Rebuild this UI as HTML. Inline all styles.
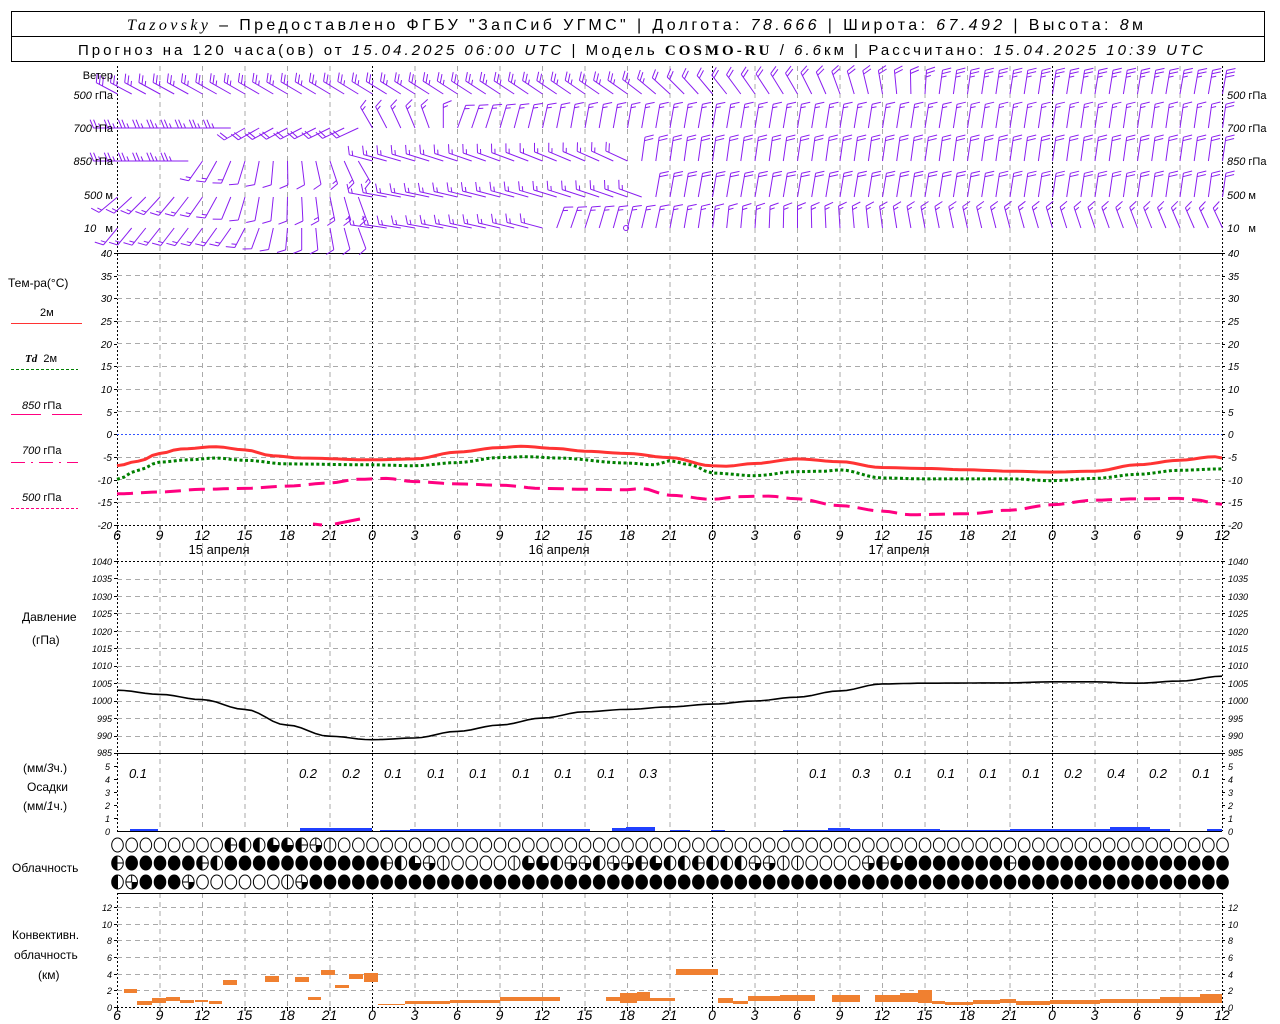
<!DOCTYPE html>
<html><head><meta charset="utf-8"><style>
html,body{margin:0;padding:0;background:#fff;}
svg{display:block;}
text{font-family:"Liberation Sans",sans-serif;fill:#000;}
.it{font-style:italic;}
.ax{font-size:10px;font-style:italic;}
.px{font-size:9px;font-style:italic;}
.hx{font-size:14px;font-style:italic;}
.lb{font-size:12px;}
</style></head><body>
<svg id="s" width="1280" height="1024" viewBox="0 0 1280 1024" xmlns="http://www.w3.org/2000/svg">
<rect width="1280" height="1024" fill="#fff"/>
<rect x="11.5" y="11.5" width="1253" height="50" fill="none" stroke="#000"/>
<line x1="11" y1="36.5" x2="1265" y2="36.5" stroke="#000"/>
<text x="127" y="30" font-size="16" textLength="1016" lengthAdjust="spacing"><tspan font-family="Liberation Serif" font-style="italic">Tazovsky</tspan> – Предоставлено ФГБУ "ЗапСиб УГМС" | Долгота: <tspan font-style="italic">78.666</tspan> | Широта: <tspan font-style="italic">67.492</tspan> | Высота: <tspan font-style="italic">8</tspan>м</text>
<text x="78" y="55" font-size="15" textLength="1125" lengthAdjust="spacing">Прогноз на 120 часа(ов) от <tspan font-style="italic">15.04.2025 06:00 UTC</tspan> | Модель <tspan font-family="Liberation Serif" font-weight="bold">COSMO-RU</tspan> / <tspan font-style="italic">6.6</tspan>км | Рассчитано: <tspan font-style="italic">15.04.2025 10:39 UTC</tspan></text>

<g id="grid"></g>
<g id="data"></g>

<g font-size="11">
<text x="113" y="79" text-anchor="end">Ветер</text>
<text x="113" y="99" text-anchor="end"><tspan class="it">500</tspan> гПа</text>
<text x="113" y="132" text-anchor="end"><tspan class="it">700</tspan> гПа</text>
<text x="113" y="165" text-anchor="end"><tspan class="it">850</tspan> гПа</text>
<text x="113" y="199" text-anchor="end"><tspan class="it">500</tspan> м</text>
<text x="113" y="232" text-anchor="end"><tspan class="it">10</tspan>&#160;&#160; м</text>
<text x="1227" y="99"><tspan class="it">500</tspan> гПа</text>
<text x="1227" y="132"><tspan class="it">700</tspan> гПа</text>
<text x="1227" y="165"><tspan class="it">850</tspan> гПа</text>
<text x="1227" y="199"><tspan class="it">500</tspan> м</text>
<text x="1227" y="232"><tspan class="it">10</tspan>&#160;&#160; м</text>
</g>

<g font-size="12">
<text x="8" y="287">Тем-ра(°C)</text>
<text x="40" y="316" font-size="11">2м</text>
<text x="25" y="362" font-size="11"><tspan font-family="Liberation Serif" font-style="italic" font-weight="bold">Td</tspan>&#160; 2м</text>
<text x="22" y="409" font-size="11"><tspan class="it">850</tspan> гПа</text>
<text x="22" y="454" font-size="11"><tspan class="it">700</tspan> гПа</text>
<text x="22" y="501" font-size="11"><tspan class="it">500</tspan> гПа</text>
<text x="22" y="621">Давление</text>
<text x="32" y="644">(гПа)</text>
<text x="23" y="772">(мм/<tspan class="it">3</tspan>ч.)</text>
<text x="27" y="791">Осадки</text>
<text x="23" y="810">(мм/<tspan class="it">1</tspan>ч.)</text>
<text x="12" y="872">Облачность</text>
<text x="12" y="939">Конвективн.</text>
<text x="14" y="959">облачность</text>
<text x="38" y="979">(км)</text>
</g>
<line x1="11" y1="323.5" x2="82" y2="323.5" stroke="#ff3333"/>
<line x1="11" y1="369.5" x2="78" y2="369.5" stroke="#008000" stroke-dasharray="3,2"/>
<line x1="11" y1="414.5" x2="41" y2="414.5" stroke="#ff0080"/><line x1="52" y1="414.5" x2="82" y2="414.5" stroke="#ff0080"/>
<line x1="11" y1="462.5" x2="78" y2="462.5" stroke="#ff0080" stroke-dasharray="14,6,2,6"/>
<line x1="11" y1="508.5" x2="78" y2="508.5" stroke="#ff0080" stroke-dasharray="3,2"/>

<g class="ax" text-anchor="end">
<text x="112" y="257">40</text><text x="112" y="280">35</text><text x="112" y="302">30</text><text x="112" y="325">25</text><text x="112" y="348">20</text><text x="112" y="370">15</text><text x="112" y="393">10</text><text x="112" y="416">5</text><text x="112" y="438">0</text><text x="112" y="461">-5</text><text x="112" y="484">-10</text><text x="112" y="506">-15</text><text x="112" y="529">-20</text>
</g>
<g class="ax">
<text x="1228" y="257">40</text><text x="1228" y="280">35</text><text x="1228" y="302">30</text><text x="1228" y="325">25</text><text x="1228" y="348">20</text><text x="1228" y="370">15</text><text x="1228" y="393">10</text><text x="1228" y="416">5</text><text x="1228" y="438">0</text><text x="1228" y="461">-5</text><text x="1228" y="484">-10</text><text x="1228" y="506">-15</text><text x="1228" y="529">-20</text>
</g>
<g class="px" text-anchor="end">
<text x="112" y="565">1040</text><text x="112" y="582">1035</text><text x="112" y="600">1030</text><text x="112" y="617">1025</text><text x="112" y="635">1020</text><text x="112" y="652">1015</text><text x="112" y="669">1010</text><text x="112" y="687">1005</text><text x="112" y="704">1000</text><text x="112" y="722">995</text><text x="112" y="739">990</text><text x="112" y="756">985</text>
<text x="110" y="770">5</text><text x="110" y="783">4</text><text x="110" y="796">3</text><text x="110" y="809">2</text><text x="110" y="822">1</text><text x="110" y="835">0</text>
<text x="112" y="911">12</text><text x="112" y="928">10</text><text x="112" y="944">8</text><text x="112" y="961">6</text><text x="112" y="978">4</text><text x="112" y="994">2</text><text x="112" y="1011">0</text>
</g>
<g class="px">
<text x="1228" y="565">1040</text><text x="1228" y="582">1035</text><text x="1228" y="600">1030</text><text x="1228" y="617">1025</text><text x="1228" y="635">1020</text><text x="1228" y="652">1015</text><text x="1228" y="669">1010</text><text x="1228" y="687">1005</text><text x="1228" y="704">1000</text><text x="1228" y="722">995</text><text x="1228" y="739">990</text><text x="1228" y="756">985</text>
<text x="1228" y="770">5</text><text x="1228" y="783">4</text><text x="1228" y="796">3</text><text x="1228" y="809">2</text><text x="1228" y="822">1</text><text x="1228" y="835">0</text>
<text x="1228" y="911">12</text><text x="1228" y="928">10</text><text x="1228" y="944">8</text><text x="1228" y="961">6</text><text x="1228" y="978">4</text><text x="1228" y="994">2</text><text x="1228" y="1011">0</text>
</g>

<g class="hx" text-anchor="middle">
<text x="117" y="540">6</text><text x="159.5" y="540">9</text><text x="202" y="540">12</text><text x="244.5" y="540">15</text><text x="287" y="540">18</text><text x="329.5" y="540">21</text><text x="372" y="540">0</text><text x="414.5" y="540">3</text><text x="457" y="540">6</text><text x="499.5" y="540">9</text><text x="542" y="540">12</text><text x="584.5" y="540">15</text><text x="627" y="540">18</text><text x="669.5" y="540">21</text><text x="712" y="540">0</text><text x="754.5" y="540">3</text><text x="797" y="540">6</text><text x="839.5" y="540">9</text><text x="882" y="540">12</text><text x="924.5" y="540">15</text><text x="967" y="540">18</text><text x="1009.5" y="540">21</text><text x="1052" y="540">0</text><text x="1094.5" y="540">3</text><text x="1137" y="540">6</text><text x="1179.5" y="540">9</text><text x="1222" y="540">12</text>
<text x="117" y="1020">6</text><text x="159.5" y="1020">9</text><text x="202" y="1020">12</text><text x="244.5" y="1020">15</text><text x="287" y="1020">18</text><text x="329.5" y="1020">21</text><text x="372" y="1020">0</text><text x="414.5" y="1020">3</text><text x="457" y="1020">6</text><text x="499.5" y="1020">9</text><text x="542" y="1020">12</text><text x="584.5" y="1020">15</text><text x="627" y="1020">18</text><text x="669.5" y="1020">21</text><text x="712" y="1020">0</text><text x="754.5" y="1020">3</text><text x="797" y="1020">6</text><text x="839.5" y="1020">9</text><text x="882" y="1020">12</text><text x="924.5" y="1020">15</text><text x="967" y="1020">18</text><text x="1009.5" y="1020">21</text><text x="1052" y="1020">0</text><text x="1094.5" y="1020">3</text><text x="1137" y="1020">6</text><text x="1179.5" y="1020">9</text><text x="1222" y="1020">12</text>
</g>
<g font-size="13" text-anchor="middle">
<text x="219" y="554">15 апреля</text>
<text x="559" y="554">16 апреля</text>
<text x="899" y="554">17 апреля</text>
</g>
<g class="it" font-size="13" text-anchor="middle">
<text x="138" y="778">0.1</text><text x="308" y="778">0.2</text><text x="351" y="778">0.2</text><text x="393" y="778">0.1</text><text x="436" y="778">0.1</text><text x="478" y="778">0.1</text><text x="521" y="778">0.1</text><text x="563" y="778">0.1</text><text x="606" y="778">0.1</text><text x="648" y="778">0.3</text><text x="818" y="778">0.1</text><text x="861" y="778">0.3</text><text x="903" y="778">0.1</text><text x="946" y="778">0.1</text><text x="988" y="778">0.1</text><text x="1031" y="778">0.1</text><text x="1073" y="778">0.2</text><text x="1116" y="778">0.4</text><text x="1158" y="778">0.2</text><text x="1201" y="778">0.1</text>
</g>
</svg>
<script>
(function(){
var NS="http://www.w3.org/2000/svg";
var G=document.getElementById('grid'),D=document.getElementById('data');
function el(p,t,a){var e=document.createElementNS(NS,t);for(var k in a)e.setAttribute(k,a[k]);p.appendChild(e);return e;}
function X(h){return 117+h*14.167;}
function ln(p,x1,y1,x2,y2,c,w,da){var a={x1:x1,y1:y1,x2:x2,y2:y2,stroke:c,'stroke-width':w||1};if(da)a['stroke-dasharray']=da;return el(p,'line',a);}
var spans=[[66,831],[893,1007]];
for(var h=0;h<=78;h+=3){var x=X(h)+0.5;var mid=(h==18||h==42||h==66);var axis=(h==0||h==78);
 spans.forEach(function(s){ if(mid||axis) ln(G,x,s[0],x,s[1],'#000',1,'2,2'); else ln(G,x,s[0],x,s[1],'#aaa',1,'5,4');});
 [525,1007].forEach(function(y){ln(G,x,y,x,y+4,'#000',1);});
}
function hg(y,c,da){ln(G,117,y+0.5,1222,y+0.5,c||'#aaa',1,da||'5,4');}
for(var t=35;t>=-15;t-=5){var y=Math.round(434-t*4.533);if(t==0)hg(y,'#3355ff','2,2');else hg(y);}
for(var p=1035;p>=990;p-=5){hg(Math.round(753-(p-985)*3.49));}
for(var k=2;k<=12;k+=2){hg(Math.round(1007-k*8.33));}
ln(G,117,253.5,1222,253.5,'#000',1);
ln(G,117,525.5,1222,525.5,'#000',1,'2,2');
ln(G,117,561.5,1222,561.5,'#000',1,'2,2');
ln(G,117,753.5,1222,753.5,'#000',1);
ln(G,117,831.5,1222,831.5,'#000',1);
ln(G,117,893.5,1222,893.5,'#000',1);
ln(G,117,1007.5,1222,1007.5,'#000',1,'2,2');
[[253,525,4.533*5],[561,753,3.49*5],[766,831,13.1],[907,1007,16.67]].forEach(function(r){
 for(var y=r[0];y<=r[1]+0.5;y+=r[2]){ln(G,114,Math.round(y)+0.5,117,Math.round(y)+0.5,'#000',1);ln(G,1222,Math.round(y)+0.5,1225,Math.round(y)+0.5,'#000',1);}
});
function interp(pts,h){for(var i=0;i<pts.length-1;i++){if(h>=pts[i][0]&&h<=pts[i+1][0]){var a=pts[i],b=pts[i+1],f=(h-a[0])/(b[0]-a[0]);f=(1-Math.cos(f*Math.PI))/2;return a[1]+(b[1]-a[1])*f;}}return pts[pts.length-1][1];}
function curve(pts,fy,h0,h1,attrs){var d='';for(var h=h0;h<=h1+0.001;h+=0.5){d+=(d?'L':'M')+X(h).toFixed(1)+','+fy(interp(pts,h)).toFixed(1);}attrs.d=d;attrs.fill='none';el(D,'path',attrs);}
function TY(t){return 434-t*4.533;}
var t2=[[0,-7],[1.5,-6],[3,-4.3],[4.5,-3.3],[7,-2.8],[9,-3.5],[11,-4.8],[13,-5.3],[18,-5.7],[21,-5.5],[24,-4],[27,-3],[28.5,-2.7],[31,-3.2],[33,-3.8],[36,-4.3],[39,-5.2],[42,-7],[43,-7.1],[45,-6.5],[48,-5.5],[51,-6.1],[54,-7.4],[57,-7.6],[60,-7.9],[63,-8.2],[66,-8.4],[69,-8.2],[72,-6.8],[75,-5.8],[77.5,-5],[78,-5.3]];
var td=[[0,-10],[1.5,-8],[3,-6.2],[5,-5.7],[7,-5.3],[9,-5.8],[12,-6.6],[18,-6.8],[21,-7],[24,-6.3],[27,-5.2],[29,-5],[31,-5.3],[36,-6.4],[38,-6.8],[39,-5.9],[40.5,-6.8],[42,-8.6],[45,-9.2],[48,-8.3],[50,-8.2],[51,-7.9],[54,-9.7],[57,-9.9],[63,-9.9],[66,-10.3],[69,-9.8],[72,-8.9],[75,-8],[78,-7.7]];
var t85=[[0,-13.2],[3,-12.8],[6,-12.2],[9,-12],[12,-11.5],[15,-10.8],[17,-10],[19,-9.8],[21,-10.5],[24,-11],[27,-11.3],[30,-12],[33,-12.2],[36,-12.3],[37,-12],[39,-13.5],[42,-14.4],[44,-13.8],[46,-13.7],[48,-14.3],[51,-15.8],[54,-17],[56,-17.8],[60,-17.6],[63,-16.8],[66,-15.6],[69,-14.6],[72,-14.3],[75,-14.2],[76,-14.5],[78,-15.5]];
curve(t85,TY,0,78,{stroke:'#ff0080','stroke-width':3,'stroke-dasharray':'16,8'});
curve(td,TY,0,78,{stroke:'#008000','stroke-width':3,'stroke-dasharray':'3,2.5'});
curve(t2,TY,0,78,{stroke:'#ff3333','stroke-width':3});
el(D,'path',{d:'M313,524 L322,525 M335,524 L350,521 L360,519',stroke:'#ff0080','stroke-width':3,fill:'none'});
var pr=[[0,1003],[3,1001.8],[6,1000.3],[9,997.5],[12,993],[15,989.8],[18,988.8],[21,989.3],[24,991.2],[27,993],[30,995],[33,996.8],[36,997.5],[39,998.2],[42,999],[45,999.9],[48,1001],[51,1002.8],[54,1004.8],[57,1005],[63,1005.1],[66,1005.4],[69,1005.4],[72,1005],[75,1005.6],[78,1007]];
curve(pr,function(p){return 753-(p-985)*3.49;},0,78,{stroke:'#000','stroke-width':1.6});
var pb=[[130,158,2],[300,372,3],[380,410,1],[410,590,2],[612,626,3],[626,655,4],[670,690,1],[711,725,1],[783,828,1],[828,850,3],[850,940,2],[940,1010,1],[1010,1110,2],[1110,1150,4],[1150,1170,2],[1207,1222,2]];
pb.forEach(function(b){el(D,'rect',{x:b[0],y:831-b[2],width:b[1]-b[0],height:b[2],fill:'#2040ff'});});
var cb=[[124,137,989,993],[137,152,1001,1005],[152,166,998,1003],[166,180,997,1001],[180,194,1000,1003],[195,208,1000,1002],[209,222,1001,1004],[223,237,980,985],[265,279,976,982],[295,309,977,982],[308,321,997,1000],[321,335,970,975],[335,349,985,988],[349,363,974,979],[364,378,973,982],[378,405,1004,1005],[405,450,1001,1004],[450,500,1000,1003],[500,560,997,1001],[606,620,997,1001],[620,637,993,1003],[637,650,992,1001],[650,675,998,1001],[676,718,969,975],[718,733,998,1003],[733,748,1001,1004],[748,780,996,1001],[780,815,995,1001],[832,860,995,1002],[875,900,995,1002],[900,918,993,1002],[918,932,990,1003],[932,945,1001,1004],[945,973,1002,1005],[973,1000,1000,1004],[1000,1016,999,1003],[1016,1050,1001,1005],[1050,1100,1000,1004],[1100,1160,999,1003],[1160,1200,997,1003],[1200,1222,994,1003]];
cb.forEach(function(b){el(D,'rect',{x:b[0],y:b[2],width:b[1]-b[0],height:b[3]-b[2],fill:'#f08030'});});
function rowStr(spec){var a=[];spec.forEach(function(s){for(var i=0;i<s[1];i++)a.push(s[0]);});while(a.length<79)a.push(a[a.length-1]);return a;}
var r1=rowStr([['o',8],['t',1],['h',2],['3',2],['t',1],['q',1],['v',1],['o',63]]);
var r2=rowStr([['t',1],['f',5],['t',1],['h',1],['f',11],['t',1],['h',1],['3',1],['q',1],['v',1],['o',4],['v',1],['3',2],['h',1],['q',2],['h',1],['q',2],['t',1],['3',1],['h',2],['t',1],['h',3],['q',2],['v',2],['o',4],['q',1],['t',1],['3',1],['f',7],['t',1],['f',15]]);
var r3=rowStr([['h',1],['q',1],['f',3],['q',1],['o',6],['v',1],['q',1],['f',65]]);
var rx=5.8,ry=7;
function sector(cx,cy,a1,a2){function pt(a){var r=a*Math.PI/180;return (cx+rx*Math.sin(r)).toFixed(2)+','+(cy-ry*Math.cos(r)).toFixed(2);}var large=(a2-a1)>180?1:0;return 'M'+cx+','+cy+'L'+pt(a1)+'A'+rx+','+ry+' 0 '+large+' 1 '+pt(a2)+'Z';}
function cloud(cx,cy,c){
 el(D,'ellipse',{cx:cx,cy:cy,rx:rx,ry:ry,fill:c=='f'?'#000':'#fff',stroke:'#000','stroke-width':1});
 if(c=='h'||c=='t')el(D,'path',{d:sector(cx,cy,180,360),fill:'#000'});
 if(c=='t')ln(D,cx,cy,cx+rx,cy,'#000',1);
 if(c=='q'){el(D,'path',{d:sector(cx,cy,90,180),fill:'#000'});ln(D,cx,cy-ry,cx,cy,'#000',1);ln(D,cx-rx,cy,cx,cy,'#000',1);}
 if(c=='3')el(D,'path',{d:sector(cx,cy,90,360),fill:'#000'});
 if(c=='v'||c=='h')ln(D,cx,cy-ry,cx,cy+ry,'#000',1);
}
[[r1,845],[r2,863],[r3,882]].forEach(function(r){for(var i=0;i<79;i++)cloud(X(i)+0.5,r[1],r[0][i]);});
var C='#8a1ef0';
function barb(x,y,ang,n,L){L=L||24;var a=ang*Math.PI/180,dx=Math.sin(a),dy=-Math.cos(a);var tx=x+dx*L,ty=y+dy*L;
 var d='M'+x.toFixed(1)+','+y.toFixed(1)+'L'+tx.toFixed(1)+','+ty.toFixed(1);
 var fa=(ang+68)*Math.PI/180,fx=Math.sin(fa),fy=-Math.cos(fa);
 var full=Math.floor(n),half=n-full>0.25;
 for(var i=0;i<full;i++){var px=tx-dx*i*3.5,py=ty-dy*i*3.5;d+='M'+px.toFixed(1)+','+py.toFixed(1)+'l'+(fx*9).toFixed(1)+','+(fy*9).toFixed(1);}
 if(half){var px=tx-dx*full*3.5,py=ty-dy*full*3.5;d+='M'+px.toFixed(1)+','+py.toFixed(1)+'l'+(fx*5).toFixed(1)+','+(fy*5).toFixed(1);}
 el(D,'path',{d:d,stroke:C,'stroke-width':1,fill:'none'});}
function lin(pts,h){for(var i=0;i<pts.length-1;i++){if(h>=pts[i][0]&&h<=pts[i+1][0]){var a=pts[i],b=pts[i+1],f=(h-a[0])/(b[0]-a[0]);return [a[1]+(b[1]-a[1])*f,a[2]+(b[2]-a[2])*f];}}var l=pts[pts.length-1];return [l[1],l[2]];}
var rows=[
 [94,[[0,-62,3],[36,-55,2.5],[42,-40,2],[48,-30,2],[54,-10,2],[58,8,2.5],[78,10,3]],24],
 [128,[[0,-90,2.5],[8,-90,2.5],[9,-120,2],[17,-115,2],[18,-30,1.5],[22,-20,1.5],[24,20,1.5],[32,10,1.5],[78,8,2]],24],
 [161,[[0,-90,2.5],[5,-90,2.5],[6,215,1.5],[11,185,1],[17,150,1.5],[18,-75,1.5],[36,-65,2],[37,8,2],[78,8,2]],24],
 [197,[[0,230,1.5],[6,215,1.5],[10,190,1],[17,160,1.5],[18,-80,1.5],[37,-70,1.5],[38,10,2],[78,8,2]],24],
 [228,[[0,220,1.5],[8,215,1.5],[12,185,1],[17,160,1],[18,-82,1.5],[30,-75,1.5],[31,20,1.5],[44,5,1.5],[56,-10,1.5],[78,-25,1.5]],22]
];
rows.forEach(function(r){for(var h=0;h<=78;h++){var v=lin(r[1],h);barb(X(h)+0.5,r[0],v[0],v[1],r[2]);}});
el(D,'circle',{cx:626,cy:228,r:2.5,fill:'none',stroke:C});
})();
</script>
</body></html>
